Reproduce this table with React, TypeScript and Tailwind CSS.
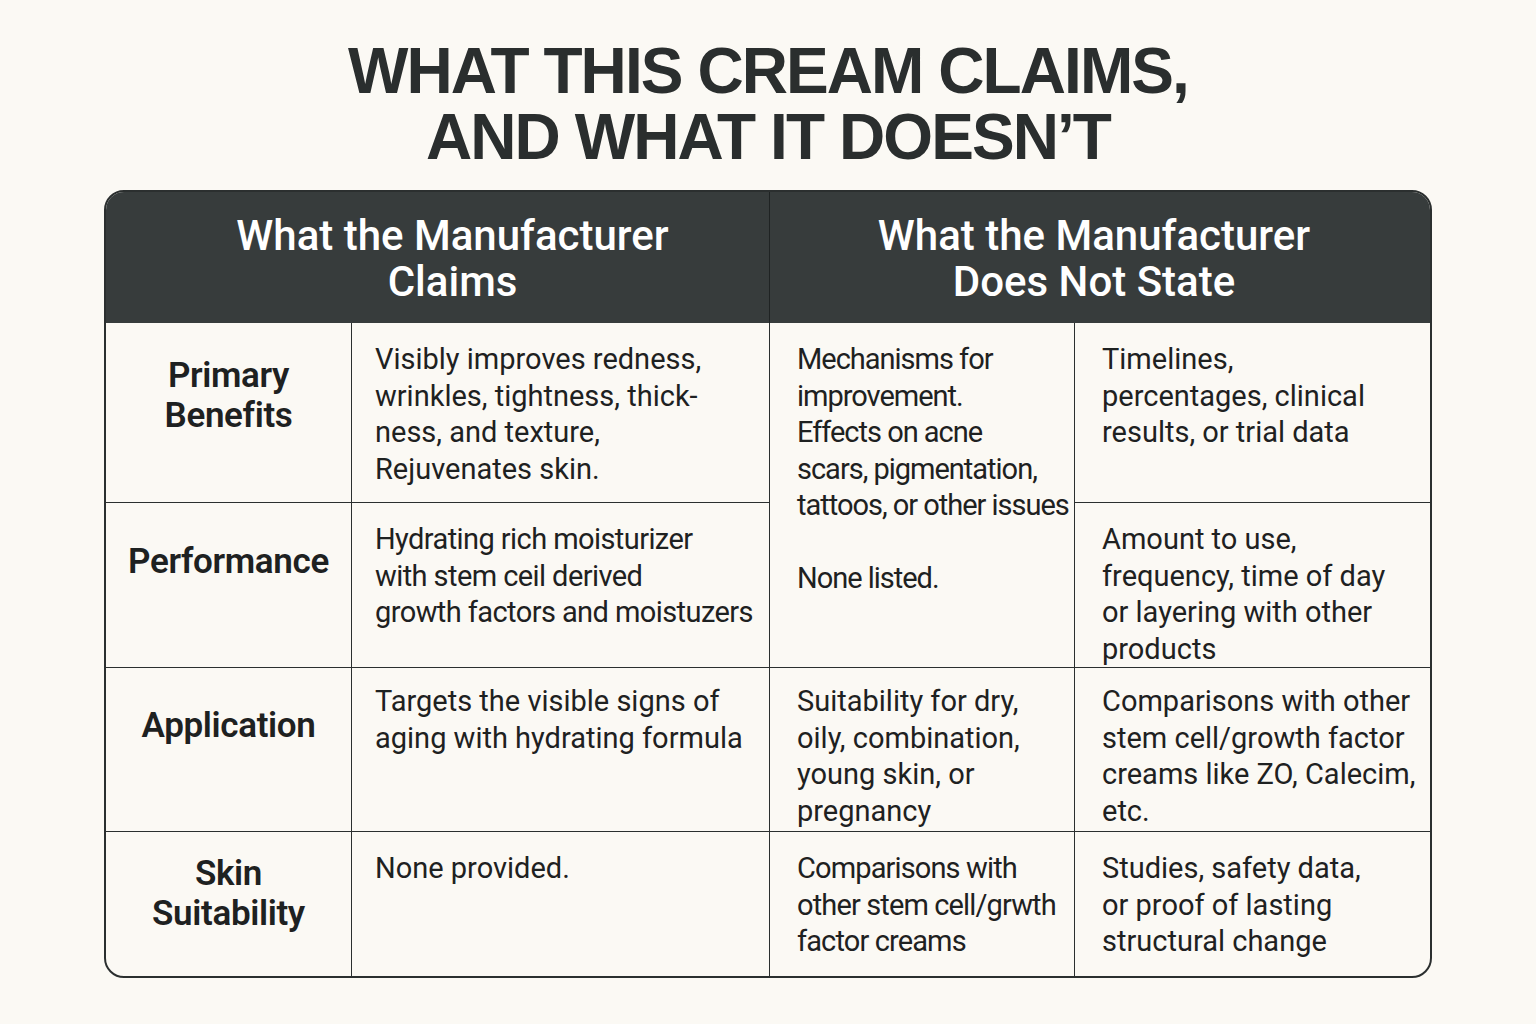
import React from 'react';

const cellText = 'text-[29px] leading-[36.5px] text-[#1e2121] whitespace-nowrap';
const labelText = 'text-[35px] leading-[40px] font-semibold text-[#1e2121] text-center tracking-[-0.01em]';

function Label({ children, last, pad }: { children: React.ReactNode; last?: boolean; pad: string }) {
  return (
    <div
      className={`flex items-center justify-center border-r-[1.5px] border-[#2b2f2f] ${pad} ${
        last ? '' : 'border-b-[1.5px]'
      }`}
    >
      <div className={labelText}>{children}</div>
    </div>
  );
}

function Cell({
  children,
  right = true,
  bottom = true,
  className = '',
}: {
  children: React.ReactNode;
  right?: boolean;
  bottom?: boolean;
  className?: string;
}) {
  return (
    <div
      className={`${cellText} ${right ? 'border-r-[1.5px]' : ''} ${
        bottom ? 'border-b-[1.5px]' : ''
      } border-[#2b2f2f] ${className}`}
    >
      {children}
    </div>
  );
}

export default function App() {
  return (
    <div
      className="w-[1536px] h-[1024px] bg-[#fbf9f4] flex flex-col items-center"
      style={{ fontFamily: 'Roboto, "Liberation Sans", sans-serif' }}
    >
      <h1
        className="mt-[38px] text-center text-[#2a2e2e] font-bold uppercase text-[64px] leading-[66px] tracking-[-0.03em]"
        style={{ fontFamily: '"Liberation Sans", Arial, sans-serif' }}
      >
        What this cream claims,
        <br />
        and what it doesn’t
      </h1>

      <div className="mt-[20px] w-[1328px] rounded-[20px] border-2 border-[#2b2f2f] overflow-hidden">
        <div className="grid grid-cols-[246px_418px_305px_357px] grid-rows-[131px_180px_165px_164px_144px]">
          {/* header */}
          <div className="col-span-2 bg-[#373c3c] flex items-center justify-center border-r-[1.5px] border-[#1f2323]">
            <div className="text-white text-center text-[42px] leading-[46px] font-medium pt-[2px] pl-[30px]">
              What the Manufacturer
              <br />
              Claims
            </div>
          </div>
          <div className="col-span-2 bg-[#373c3c] flex items-center justify-center">
            <div className="text-white text-center text-[42px] leading-[46px] font-medium pt-[2px] pr-[14px]">
              What the Manufacturer
              <br />
              Does Not State
            </div>
          </div>

          {/* row 1 */}
          <Label pad="pb-[34px]">
            Primary
            <br />
            Benefits
          </Label>
          <Cell className="pl-[23px] pt-[18px]">
            Visibly improves redness,
            <br />
            wrinkles, tightness, thick-
            <br />
            ness, and texture,
            <br />
            Rejuvenates skin.
          </Cell>
          <Cell className="row-span-2 pl-[27px] pt-[18px] tracking-[-0.035em]">
            Mechanisms for
            <br />
            improvement.
            <br />
            Effects on acne
            <br />
            scars, pigmentation,
            <br />
            tattoos, or other issues
            <br />
            <br />
            None listed.
          </Cell>
          <Cell right={false} className="pl-[27px] pt-[18px]">
            Timelines,
            <br />
            percentages, clinical
            <br />
            results, or trial data
          </Cell>

          {/* row 2 */}
          <Label pad="pb-[46px]">Performance</Label>
          <Cell className="pl-[23px] pt-[18px] tracking-[-0.02em]">
            Hydrating rich moisturizer
            <br />
            with stem ceil derived
            <br />
            growth factors and moistuzers
          </Cell>
          <Cell right={false} className="pl-[27px] pt-[18px]">
            Amount to use,
            <br />
            frequency, time of day
            <br />
            or layering with other
            <br />
            products
          </Cell>

          {/* row 3 */}
          <Label pad="pb-[48px]">Application</Label>
          <Cell className="pl-[23px] pt-[15px]">
            Targets the visible signs of
            <br />
            aging with hydrating formula
          </Cell>
          <Cell className="pl-[27px] pt-[15px]">
            Suitability for dry,
            <br />
            oily, combination,
            <br />
            young skin, or
            <br />
            pregnancy
          </Cell>
          <Cell right={false} className="pl-[27px] pt-[15px]">
            Comparisons with other
            <br />
            stem cell/growth factor
            <br />
            creams like ZO, Calecim,
            <br />
            etc.
          </Cell>

          {/* row 4 */}
          <Label last pad="pb-[20px]">
            Skin
            <br />
            Suitability
          </Label>
          <Cell bottom={false} className="pl-[23px] pt-[18px]">
            None provided.
          </Cell>
          <Cell bottom={false} className="pl-[27px] pt-[18px] tracking-[-0.03em]">
            Comparisons with
            <br />
            other stem cell/grwth
            <br />
            factor creams
          </Cell>
          <Cell bottom={false} right={false} className="pl-[27px] pt-[18px]">
            Studies, safety data,
            <br />
            or proof of lasting
            <br />
            structural change
          </Cell>
        </div>
      </div>
    </div>
  );
}
